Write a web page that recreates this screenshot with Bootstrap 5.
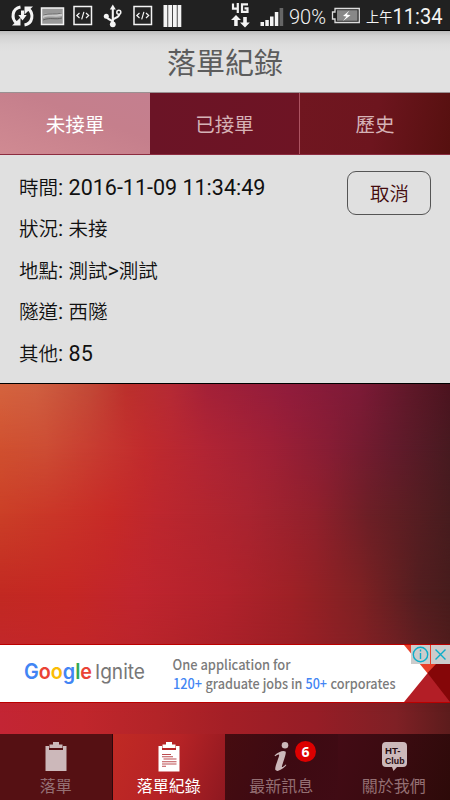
<!DOCTYPE html>
<html lang="zh-Hant">
<head>
<meta charset="utf-8">
<meta name="viewport" content="width=device-width, initial-scale=1">
<title>落單紀錄</title>
<link href="https://cdn.jsdelivr.net/npm/bootstrap@5.3.0/dist/css/bootstrap.min.css" rel="stylesheet">
<style>
body{font-family:Roboto,"Noto Sans CJK TC",sans-serif;background:#000}
.screen{width:450px;height:800px;isolation:isolate}
.backdrop{left:0;top:384px;width:450px;height:416px;z-index:-1}
.cjk{font-family:"Noto Sans CJK TC",sans-serif;font-size:19.5px}
.status{height:31px;background:#212121;border-bottom:1px solid #000}
.status svg,.ad-banner svg{display:block}
.title-bar{height:62px;background:linear-gradient(#bcbcbc,#d2d2d2 5px,#dedede 14px,#e1e1e1 20px);border-bottom:1px solid #9a9092;color:#5c5c5c;font:29px/61px "Noto Sans CJK TC",sans-serif}
.tabs{height:62px;border-bottom:1px solid #8c2c40}
.tab-item{width:150px;font-size:19.5px;line-height:62px;color:#d5b2b6;background:#6e1424}
.tab-item.on{color:#fff;background:linear-gradient(20deg,#d08a92,#c57f8c 60%,#c47f8f)}
.tab-item.mid{background:linear-gradient(90deg,#6b1426,#6e1424);border-right:1px solid #ad5361}
.tab-item.end{background:linear-gradient(100deg,#701620,#6d151e 50%,#56100f)}
.order{height:229px;background:#e0e0e0;border-bottom:1px solid #000;color:#111;padding:10.500px 19px 0}
.line{height:41.600px;line-height:41px;font-size:21.500px;white-space:pre}
.line .cjk{font-weight:350}
.cancel{width:84px;height:44px;margin-top:5.500px;border:1px solid #555;border-radius:9px;color:#430b0d;padding:0 0 0 1px;line-height:42px;font-weight:350}
.spacer{height:259.500px}
.ad-banner{height:59px}
.bottom-nav{height:66px;margin-top:31.500px}
.nav-cell{width:112.500px;border-right:1px solid #2b080c;color:#946f73;background:#551013;font:16px/20px "Noto Sans CJK TC",sans-serif;padding-top:6px}
.nav-cell.on{background:linear-gradient(110deg,#c02a24,#b62326 50%,#8e1820);color:#fff;border:0}
.nav-cell.news{background:linear-gradient(110deg,#460c10,#3d0a12 50%,#400b14);border:0}
.nav-cell.about{background:linear-gradient(110deg,#430b15,#3a0b10 50%,#2d0a09);border:0}
.nav-cell svg{display:block;width:32px;height:34px;margin-bottom:1px}
.count{left:70px;top:7px;width:21px;height:21px;border-radius:50%;background:#dc0000;color:#fff;font:700 14px/21px "Open Sans",sans-serif}
</style>
</head>
<body>
<main class="screen position-relative overflow-hidden d-flex flex-column">
<svg class="backdrop position-absolute" viewBox="0 0 450 416" preserveAspectRatio="none">
<defs>
<linearGradient id="h1"><stop offset="0" stop-color="#d5643f"/><stop offset=".08" stop-color="#d06041"/><stop offset=".2" stop-color="#c24937"/><stop offset=".28" stop-color="#bc302c"/><stop offset=".38" stop-color="#b52a35"/><stop offset=".46" stop-color="#a42138"/><stop offset=".64" stop-color="#911c3c"/><stop offset=".8" stop-color="#7d1a37"/><stop offset=".91" stop-color="#601829"/><stop offset="1" stop-color="#4c131f"/></linearGradient>
<linearGradient id="h2"><stop offset="0" stop-color="#d0502f"/><stop offset=".1" stop-color="#cd4d34"/><stop offset=".22" stop-color="#c73a30"/><stop offset=".32" stop-color="#c12b2d"/><stop offset=".45" stop-color="#b22534"/><stop offset=".6" stop-color="#9f2036"/><stop offset=".73" stop-color="#871d34"/><stop offset=".87" stop-color="#641b2c"/><stop offset="1" stop-color="#471a20"/></linearGradient>
<linearGradient id="h3"><stop offset="0" stop-color="#cb3f27"/><stop offset=".12" stop-color="#ca3628"/><stop offset=".25" stop-color="#c72a27"/><stop offset=".35" stop-color="#bd272e"/><stop offset=".55" stop-color="#a92430"/><stop offset=".7" stop-color="#91202c"/><stop offset=".82" stop-color="#6c1f26"/><stop offset="1" stop-color="#471c1e"/></linearGradient>
<linearGradient id="h4"><stop offset="0" stop-color="#c22922"/><stop offset=".15" stop-color="#c52724"/><stop offset=".3" stop-color="#c0252e"/><stop offset=".5" stop-color="#b1222c"/><stop offset=".65" stop-color="#9e2126"/><stop offset=".8" stop-color="#7e2123"/><stop offset=".93" stop-color="#531e20"/><stop offset="1" stop-color="#471c1c"/></linearGradient>
<linearGradient id="h5"><stop offset="0" stop-color="#c32534"/><stop offset=".18" stop-color="#c0262c"/><stop offset=".35" stop-color="#b32428"/><stop offset=".5" stop-color="#a41f26"/><stop offset=".7" stop-color="#961d26"/><stop offset=".88" stop-color="#7f2025"/><stop offset="1" stop-color="#5c1c1c"/></linearGradient>
<linearGradient id="fade" x1="0" y1="0" x2="0" y2="1" color-interpolation="sRGB"><stop offset="0" stop-color="#fff" stop-opacity="0"/><stop offset="1" stop-color="#fff"/></linearGradient>
<mask id="m2" maskUnits="userSpaceOnUse" x="0" y="0" width="450" height="416"><rect width="450" height="65" fill="url(#fade)"/><rect y="65" width="450" height="351" fill="#fff"/></mask>
<mask id="m3" maskUnits="userSpaceOnUse" x="0" y="0" width="450" height="416"><rect y="65" width="450" height="65" fill="url(#fade)"/><rect y="130" width="450" height="286" fill="#fff"/></mask>
<mask id="m4" maskUnits="userSpaceOnUse" x="0" y="0" width="450" height="416"><rect y="130" width="450" height="80" fill="url(#fade)"/><rect y="210" width="450" height="206" fill="#fff"/></mask>
<mask id="m5" maskUnits="userSpaceOnUse" x="0" y="0" width="450" height="416"><rect y="210" width="450" height="120" fill="url(#fade)"/><rect y="330" width="450" height="86" fill="#fff"/></mask>
</defs>
<rect width="450" height="416" fill="url(#h1)"/>
<rect width="450" height="416" fill="url(#h2)" mask="url(#m2)"/>
<rect width="450" height="416" fill="url(#h3)" mask="url(#m3)"/>
<rect width="450" height="416" fill="url(#h4)" mask="url(#m4)"/>
<rect width="450" height="416" fill="url(#h5)" mask="url(#m5)"/>
</svg>

<header class="status flex-shrink-0">
<svg width="450" height="30" viewBox="0 0 450 30" fill="#f4f4f4">
<g fill="none" stroke="#f4f4f4" stroke-width="3"><path d="M20.500 7C12 8.500 11 18.500 16.500 23M24.500 25C33 23.500 34 13.500 28.500 9"/><path d="M22.500 10.500v6"/></g>
<path d="M12 25.500h8.500v-8zM33 6.500h-8.500v8zM18.300 15h8.400l-4.200 5.500z"/>
<rect x="41.500" y="8" width="22" height="16.500" fill="#999" stroke="#f4f4f4" stroke-width="1.500"/><path d="M43 14c7-1 12 1 19-2v4c-7 2-13-1-19 2z" fill="#c8c8c8"/><path d="M43 15c7-2 12 0 19-2M43 20c8-3 12 0 19-2" stroke="#555" fill="none" stroke-width=".8"/>
<g id="codebox"><rect x="74" y="6.500" width="17.500" height="18" fill="#242424" stroke="#f4f4f4" stroke-width="1.500"/><path d="M79.500 13l-2.700 2.500 2.700 2.500M86 13l2.700 2.500L86 18M83.900 11.800l-2.200 7.500" fill="none" stroke="#f4f4f4" stroke-width="1.200"/></g>
<use href="#codebox" x="60"/>
<path d="M112.800 4.500l3 5h-6z"/><circle cx="112.800" cy="24.300" r="2.900"/><circle cx="106.300" cy="16.200" r="2.500"/><circle cx="118.800" cy="12.300" r="2" fill="none" stroke="#f4f4f4" stroke-width="1.500"/><path d="M112.800 8v15M106.500 16c0 4 6.300 3.500 6.300 6.500M119.300 14c0 4.500-6.500 3.500-6.500 6.500" fill="none" stroke="#f4f4f4" stroke-width="2.100"/>
<path d="M163.500 5h3.900v22h-3.900zM168.200 5h3.900v22h-3.900zM172.900 5h3.900v22h-3.900zM177.600 5h3.700v22h-3.700z"/>
<path d="M233 3.500v5.200h5.500M237.800 3v10M248 4.300h-6v7.500h5.500V8.300h-3" fill="none" stroke="#f4f4f4" stroke-width="2.200"/>
<path d="M236 15l5 5h-3.300v6h-3.500v-6H231zM245 27.500l-5-5h3.200V17h3.600v5.500h3z"/>
<path d="M260.500 22h3.500v4h-3.500zM265.300 20h3.500v6h-3.500zM270 16.500h3.500V26H270zM274.800 12h3.500v14h-3.500z"/><path d="M279.600 8h3.600v18h-3.600z" fill="#666"/>
<text x="289" y="23.500" font-size="20.500" font-weight="300" textLength="37" lengthAdjust="spacingAndGlyphs">90%</text>
<path d="M335 8.500h24.300v14H335v-3.500h-2.500v-7h2.500z" fill="none" stroke="#ddd" stroke-width="1.300"/><rect x="337" y="10.200" width="20.500" height="10.600" fill="#888"/><path d="M349.500 10.500l-6.500 5.500 3.500.5-3.500 4.500 7.500-5.800-3.800-.7z" fill="#fff"/>
<text x="366" y="22" font-family="Noto Sans CJK TC, sans-serif" font-size="13.200" font-weight="400">上午</text>
<text x="392.500" y="23.500" font-size="21.500" textLength="50" lengthAdjust="spacingAndGlyphs">11:34</text>
</svg>
</header>
<h1 class="title-bar m-0 text-center flex-shrink-0">落單紀錄</h1>
<nav class="tabs cjk d-flex text-center flex-shrink-0">
<div class="tab-item on">未接單</div><div class="tab-item mid">已接單</div><div class="tab-item end">歷史</div>
</nav>
<section class="order d-flex justify-content-between flex-shrink-0">
<div>
<div class="line"><span class="cjk">時間</span>: 2016-11-09 11:34:49</div>
<div class="line"><span class="cjk">狀況</span>: <span class="cjk">未接</span></div>
<div class="line"><span class="cjk">地點</span>: <span class="cjk">測試</span>&gt;<span class="cjk">測試</span></div>
<div class="line"><span class="cjk">隧道</span>: <span class="cjk">西隧</span></div>
<div class="line"><span class="cjk">其他</span>: 85</div>
</div>
<button class="btn cancel cjk" type="button">取消</button>
</section>
<div class="spacer flex-shrink-0"></div>
<aside class="ad-banner flex-shrink-0">
<svg width="450" height="59" viewBox="0 0 450 59">
<rect width="450" height="59" fill="#b00"/><path d="M404 1h46v57h-46z" fill="#e8402a"/><path d="M436 20h14v38h-20l-2.500-29z" fill="#850608"/><path d="M427.500 29L450 58h-46z" fill="#b31e26"/><path d="M0 1h404l23.500 28.200L404 58H0z" fill="#fff"/>
<rect x="411" y="1" width="19" height="19" fill="#ccc"/><rect x="431" y="1" width="19" height="19" fill="#ccc"/>
<g fill="none" stroke="#0cadc9" stroke-width="1.400"><circle cx="420.500" cy="10.500" r="7.200"/><path d="M420.500 9v6M420.500 5.500v2M435.500 5.500l10 10M445.500 5.500l-10 10"/></g>
<g font-family="Inter, sans-serif"><text x="24" y="35" font-size="21" font-weight="600" textLength="68" lengthAdjust="spacingAndGlyphs"><tspan fill="#4285f4">G</tspan><tspan fill="#ea4335">o</tspan><tspan fill="#fbbc05">o</tspan><tspan fill="#4285f4">g</tspan><tspan fill="#34a853">l</tspan><tspan fill="#ea4335">e</tspan></text><text x="95" y="35" font-size="20.500" fill="#777" textLength="50" lengthAdjust="spacingAndGlyphs">Ignite</text></g>
<g font-family="Noto Sans CJK TC, sans-serif" font-size="14" font-weight="500" fill="#7b7b7b"><text x="172.500" y="25.500" textLength="118" lengthAdjust="spacingAndGlyphs">One application for</text><text x="173" y="44.500" fill="#4285f4" textLength="29" lengthAdjust="spacingAndGlyphs">120+</text><text x="205.500" y="44.500" textLength="97" lengthAdjust="spacingAndGlyphs">graduate jobs in</text><text x="305.500" y="44.500" fill="#4285f4" textLength="21.500" lengthAdjust="spacingAndGlyphs">50+</text><text x="330.500" y="44.500" textLength="65" lengthAdjust="spacingAndGlyphs">corporates</text></g>
</svg>
</aside>
<nav class="bottom-nav d-flex flex-shrink-0">
<div class="nav-cell d-flex flex-column align-items-center"><svg viewBox="0 0 32 34"><path d="M5.500 6H9v4h14V6h3.500v25h-21zM9.500 4.500H13V2h6v2.500h3.500V8h-13z" fill="#ccb8ba"/></svg>落單</div>
<div class="nav-cell on d-flex flex-column align-items-center"><svg viewBox="0 0 32 34"><path d="M5.500 6H9v4h14V6h3.500v25.500h-21zM9.500 4.500H13V2h6v2.500h3.500V8h-13z" fill="#fff"/><path d="M9 14.500h9M9 16.800h11M10.500 19h13M9 21.800h14.500M9 24h14.500M9 26.200h4" stroke="#bc4c50" stroke-width="1.100"/></svg>落單紀錄</div>
<div class="nav-cell news position-relative d-flex flex-column align-items-center"><svg viewBox="0 0 32 34"><circle cx="20" cy="5.200" r="3.300" fill="#ccb8ba"/><path d="M9.500 15.500c4-4 9-5.500 11-4 1.500 1.300-3.300 12.500-3.600 15.200 0 1 2-.4 3.800-2.300l.7.700c-3.300 4.200-9.200 7.300-10.900 5-1.500-2 3.400-12.200 3.700-15.200-.5-.8-2 .1-4 1.400z" fill="#ccb8ba"/></svg>最新訊息<span class="count position-absolute text-center">6</span></div>
<div class="nav-cell about d-flex flex-column align-items-center"><svg viewBox="0 0 32 34"><path d="M8 2h17q4 0 4 4v17q0 4-4 4h-6l-3.500 4-1.500-4H8q-4 0-4-4V6q0-4 4-4z" fill="#ccb8ba"/><text x="7" y="13.500" font-family="Liberation Sans" font-weight="700" font-size="9.500" fill="#260b10" textLength="15.500" lengthAdjust="spacingAndGlyphs">HT-</text><text x="7" y="23.500" font-family="Liberation Sans" font-weight="700" font-size="9.500" fill="#260b10" textLength="19.500" lengthAdjust="spacingAndGlyphs">Club</text></svg>關於我們</div>
</nav>
</main>
<script src="https://cdn.jsdelivr.net/npm/bootstrap@5.3.0/dist/js/bootstrap.bundle.min.js"></script>
</body>
</html>
